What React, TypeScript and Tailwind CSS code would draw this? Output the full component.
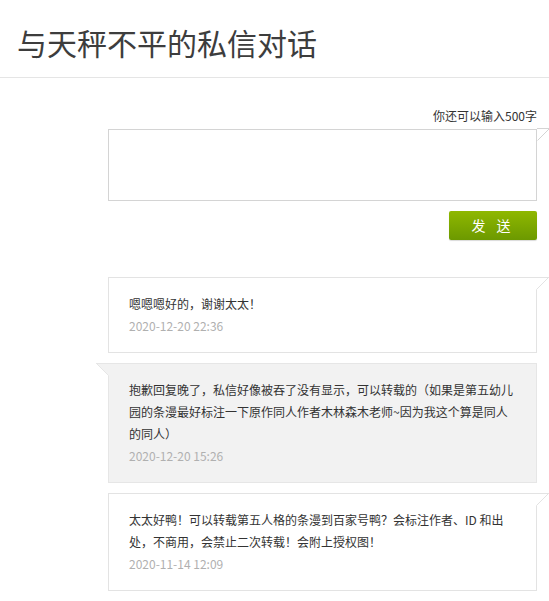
import type { ReactNode } from 'react'

const messages = [
  {
    id: 1,
    mine: true,
    text: '嗯嗯嗯好的，谢谢太太！',
    time: '2020-12-20 22:36',
  },
  {
    id: 2,
    mine: false,
    text: '抱歉回复晚了，私信好像被吞了没有显示，可以转载的（如果是第五幼儿园的条漫最好标注一下原作同人作者木林森木老师~因为我这个算是同人的同人）',
    time: '2020-12-20 15:26',
  },
  {
    id: 3,
    mine: true,
    text: '太太好鸭！可以转载第五人格的条漫到百家号鸭？会标注作者、ID 和出处，不商用，会禁止二次转载！会附上授权图！',
    time: '2020-11-14 12:09',
  },
]

// little speech-bubble corner that sticks out of the top right
function TailRight({ fill, stroke }: { fill: string; stroke: string }) {
  return (
    <svg className="absolute right-[-13px] top-[-1px]" width="13" height="13" viewBox="0 0 13 13">
      <polygon points="0,0 13,0 0,13" fill={fill} />
      <line x1="0" y1="0.5" x2="13" y2="0.5" stroke={stroke} />
      <line x1="12.5" y1="0.5" x2="0.5" y2="12.5" stroke={stroke} />
    </svg>
  )
}

function TailLeft({ fill, stroke }: { fill: string; stroke: string }) {
  return (
    <svg className="absolute left-[-13px] top-[-1px]" width="13" height="13" viewBox="0 0 13 13">
      <polygon points="0,0 13,0 13,13" fill={fill} />
      <line x1="0" y1="0.5" x2="13" y2="0.5" stroke={stroke} />
      <line x1="0.5" y1="0.5" x2="12.5" y2="12.5" stroke={stroke} />
    </svg>
  )
}

function Bubble({ mine, children }: { mine: boolean; children: ReactNode }) {
  return (
    <div
      className={
        mine
          ? 'relative border border-[#e3e3e3] bg-white px-5 pb-[15px] pt-[15px]'
          : 'relative border border-[#e6e6e6] bg-[#f2f2f2] px-5 pb-[15px] pt-[15px]'
      }
    >
      {mine ? <TailRight fill="#ffffff" stroke="#e3e3e3" /> : <TailLeft fill="#f2f2f2" stroke="#e6e6e6" />}
      {children}
    </div>
  )
}

export default function App() {
  return (
    <div className="min-h-screen bg-white font-['Noto_Sans_CJK_SC',sans-serif] text-[#333]">
      <div className="h-[78px] border-b border-[#e5e5e5] pl-[17px] pt-[22px]">
        <h1 className="text-[30px] leading-[40px] font-normal text-[#3d3d3d]">与天秤不平的私信对话</h1>
      </div>

      <div className="pl-[108px] pr-[12px] pt-[29px] pb-6">
        <div className="text-right text-[12px] leading-[18px] text-[#333]">你还可以输入500字</div>

        <div className="relative mt-1">
          <textarea className="block h-[72px] w-full resize-none border border-[#d4d4d4] bg-white p-2 text-[12px] outline-none" />
          <TailRight fill="#ffffff" stroke="#d4d4d4" />
        </div>

        <div className="mt-[10px] flex justify-end">
          <button className="h-[29px] w-[88px] rounded-[2px] bg-gradient-to-b from-[#8fb800] to-[#6c9900] text-[14px] tracking-[4px] text-white shadow-[0_1px_1px_rgba(0,0,0,0.15)]">
            发&nbsp;送
          </button>
        </div>

        <div className="mt-[37px] flex flex-col gap-[10px]">
          {messages.map((m) => (
            <Bubble key={m.id} mine={m.mine}>
              <p className="text-[12px] leading-[22px] text-[#333]">{m.text}</p>
              <p className="text-[12px] leading-[22px] text-[#b0b0b0]">{m.time}</p>
            </Bubble>
          ))}
        </div>
      </div>
    </div>
  )
}
